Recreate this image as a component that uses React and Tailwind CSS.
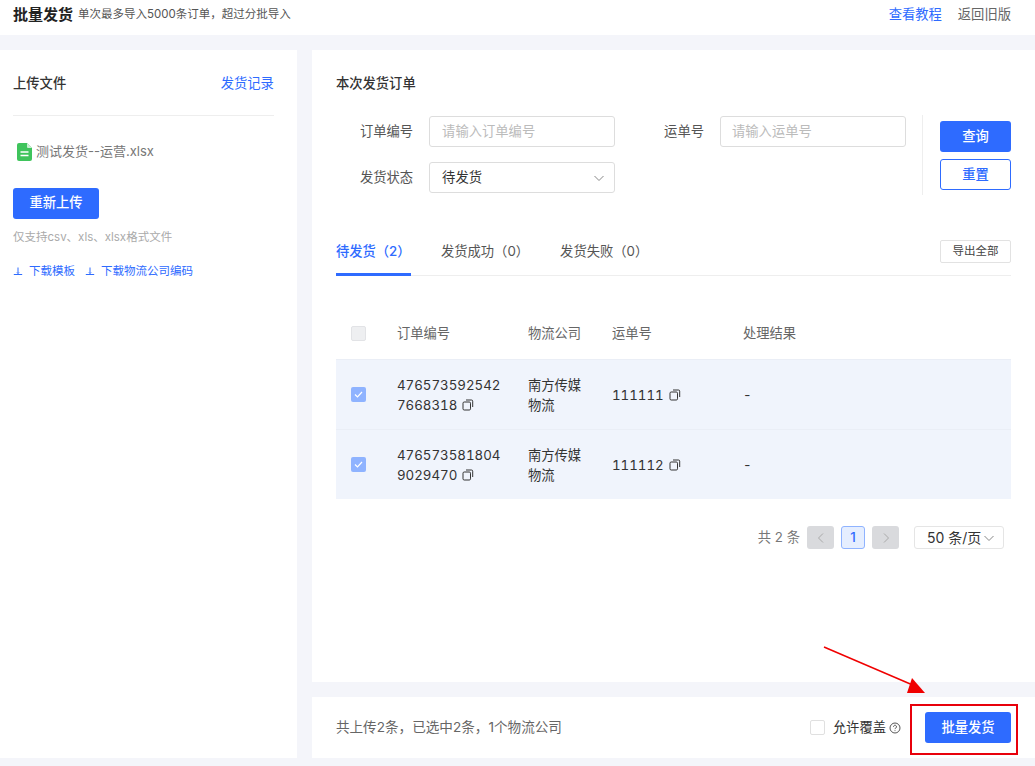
import React from 'react';

const CopyIcon = () => (
    <svg width="12" height="12" viewBox="0 0 12 12" fill="none" stroke="#333" strokeWidth="1" className="inline-block ml-[5px] mb-[2px]">
        <rect x="1" y="3" width="7.5" height="8" rx="1.2" />
        <path d="M4 1h5.5a1.2 1.2 0 0 1 1.2 1.2V8" />
    </svg>
);

const DownloadIcon = () => (
    <svg width="10" height="10" viewBox="0 0 10 10" fill="none" stroke="#2e6bff" strokeWidth="1">
        <path d="M5 1.500v6M4 6.500 5 7.500l1-1M.8 8.500h8.400" />
    </svg>
);

const Chevron = ({ color = '#888' }) => (
    <svg width="12" height="12" viewBox="0 0 12 12" fill="none" stroke={color} strokeWidth="1">
        <path d="M1.500 4 6 8.500 10.500 4" />
    </svg>
);

const Check = () => (
    <div className="w-[15px] h-[15px] rounded-[2px] bg-[#8fb3ff] flex items-center justify-center">
        <svg width="11" height="11" viewBox="0 0 11 11" fill="none" stroke="#fff" strokeWidth="1.2">
            <path d="M2 5.500 4.500 8 9 3" />
        </svg>
    </div>
);

const Field = ({ label, children }) => (
    <div className="flex items-center">
        <span className="whitespace-nowrap text-[13.3px] text-[#555] mr-4">{label}</span>
        {children}
    </div>
);

const rows = [
    ['476573592542', '7668318', '111111'],
    ['476573581804', '9029470', '111112'],
];

const App = () => {
    return (
        <div className="relative w-[1035px] h-[766px] overflow-hidden bg-[#f4f5fa] font-['Inter','Noto_Sans_CJK_SC',sans-serif] text-[#333]">
            <div className="h-[35px] bg-white flex items-center justify-between pl-[13px] pr-[24px] pb-[5px]">
                <div className="flex items-center">
                    <span className="text-[15px] font-bold text-[#222]">批量发货</span>
                    <span className="text-[11.500px] text-[#555] ml-[5px]">单次最多导入5000条订单，超过分批导入</span>
                </div>
                <div className="flex items-center gap-4 text-[13.3px]">
                    <span className="text-[#2e6bff]">查看教程</span>
                    <span className="text-[#666]">返回旧版</span>
                </div>
            </div>

            <div className="flex gap-[15px] mt-[15px] h-[708px]">
                <div className="w-[297px] bg-white pl-[13px] pr-[23px]">
                    <div className="h-[66px] border-b border-[#eeeeee] flex items-center justify-between pt-[2px]">
                        <span className="text-[13.3px] font-medium text-[#333]">上传文件</span>
                        <span className="text-[13.3px] text-[#2e6bff]">发货记录</span>
                    </div>
                    <div className="flex items-center mt-[26px] pl-[4px]">
                        <svg width="15" height="18" viewBox="0 0 15 18">
                            <path d="M2 0h8l5 5v11a2 2 0 0 1-2 2H2a2 2 0 0 1-2-2V2a2 2 0 0 1 2-2z" fill="#3fc45c" />
                            <path d="M10 0l5 5h-4a1 1 0 0 1-1-1z" fill="#c8efd2" />
                            <path d="M3.500 9h8M3.500 12.500h8" stroke="#fff" strokeWidth="1.400" />
                        </svg>
                        <span className="text-[13px] text-[#777] ml-[4px]">测试发货--运营.xlsx</span>
                    </div>
                    <button className="block mt-[26px] w-[86px] h-[31px] rounded-[3px] bg-[#2e6bff] text-white text-[13.3px] font-medium">重新上传</button>
                    <p className="mt-[10px] text-[11.500px] text-[#aaa] leading-[16px]">仅支持csv、xls、xlsx格式文件</p>
                    <div className="flex items-center mt-[18px] text-[11.500px] text-[#2e6bff] leading-[16px]">
                        <DownloadIcon />
                        <span className="ml-[6px]">下载模板</span>
                        <span className="ml-[10px]"><DownloadIcon /></span>
                        <span className="ml-[6px]">下载物流公司编码</span>
                    </div>
                </div>

                <div className="flex-1 flex flex-col gap-[15px]">
                    <div className="h-[632px] bg-white px-6">
                        <div className="pt-[23px] text-[13.3px] font-medium leading-5 text-[#333]">本次发货订单</div>
                        <div className="flex mt-[22px] h-[80px]">
                            <div className="flex flex-col gap-[15px] pt-[1px] ml-[24px]">
                                <Field label="订单编号">
                                    <div className="w-[186px] h-[31px] border border-[#ddd] rounded-[3px] pl-3 flex items-center text-[13.3px] text-[#bbb]">请输入订单编号</div>
                                </Field>
                                <Field label="发货状态">
                                    <div className="w-[186px] h-[31px] border border-[#ddd] rounded-[3px] pl-3 pr-[9px] flex items-center justify-between text-[13.3px] text-[#333]">
                                        待发货
                                        <Chevron />
                                    </div>
                                </Field>
                            </div>
                            <div className="ml-[49px] pt-[1px]">
                                <Field label="运单号">
                                    <div className="w-[186px] h-[31px] border border-[#ddd] rounded-[3px] pl-[11px] flex items-center text-[13.3px] text-[#bbb]">请输入运单号</div>
                                </Field>
                            </div>
                            <div className="ml-4 border-l border-[#eeeeee] pl-[17px] pt-[6px] flex flex-col gap-[7px]">
                                <button className="w-[71px] h-[31px] rounded-[3px] bg-[#2e6bff] text-white text-[13.3px] font-medium">查询</button>
                                <button className="w-[71px] h-[31px] rounded-[3px] border border-[#2e6bff] text-[#2e6bff] text-[13.3px] font-medium">重置</button>
                            </div>
                        </div>

                        <div className="mt-[35px] h-[46px] border-b border-[#eeeeee] flex items-start justify-between">
                            <div className="flex text-[13.3px] text-[#555] leading-5">
                                <div className="w-[75px] h-[46px] pt-[11px] border-b-[3px] border-[#2e6bff] text-[#2e6bff] font-medium whitespace-nowrap">待发货（2）</div>
                                <div className="ml-[30px] pt-[11px]">发货成功（0）</div>
                                <div className="ml-[31px] pt-[11px]">发货失败（0）</div>
                            </div>
                            <button className="w-[71px] h-[23px] mt-[10px] rounded-[2px] border border-[#e2e2e2] text-[11.500px] text-[#444]">导出全部</button>
                        </div>

                        <div className="mt-[32px]">
                            <div className="h-[51px] flex items-center text-[13.3px] text-[#666]">
                                <div className="w-[61px] pl-[15px]">
                                    <div className="w-[15px] h-[15px] rounded-[2px] bg-[#eeeff1] border border-[#e2e3e6]" />
                                </div>
                                <div className="w-[131px]">订单编号</div>
                                <div className="w-[84px]">物流公司</div>
                                <div className="w-[131px]">运单号</div>
                                <div>处理结果</div>
                            </div>
                            {rows.map((r, i) => (
                                <div key={i} className="h-[70px] bg-[#f0f4fc] border-t border-[#eaeef6] flex items-center text-[13.3px] leading-5 text-[#333] tabular-nums">
                                    <div className="w-[61px] pl-[15px]"><Check /></div>
                                    <div className="w-[131px]">
                                        <div>{r[0]}</div>
                                        <div>{r[1]}<CopyIcon /></div>
                                    </div>
                                    <div className="w-[84px]">
                                        <div>南方传媒</div>
                                        <div>物流</div>
                                    </div>
                                    <div className="w-[131px]">{r[2]}<CopyIcon /></div>
                                    <div>-</div>
                                </div>
                            ))}
                        </div>

                        <div className="mt-[27px] flex items-center justify-end pr-[7px] text-[13.3px]">
                            <span className="text-[#777] mr-[7px] whitespace-nowrap">共 2 条</span>
                            <div className="w-[27px] h-[23px] rounded-[3px] bg-[#d9dadd] flex items-center justify-center">
                                <svg width="10" height="12" viewBox="0 0 10 12" fill="none" stroke="#aaa"><path d="M7 1.500 2.500 6 7 10.500" /></svg>
                            </div>
                            <div className="w-[24px] h-[23px] ml-[7px] rounded-[3px] bg-[#e5eeff] border border-[#8fb3ff] flex items-center justify-center text-[#2e6bff] font-medium">1</div>
                            <div className="w-[27px] h-[23px] ml-[7px] rounded-[3px] bg-[#d9dadd] flex items-center justify-center">
                                <svg width="10" height="12" viewBox="0 0 10 12" fill="none" stroke="#aaa"><path d="M3 1.500 7.500 6 3 10.500" /></svg>
                            </div>
                            <div className="w-[90px] h-[23px] ml-[15px] rounded-[3px] border border-[#e5e5e5] pl-[12px] pr-[8px] flex items-center justify-between text-[#333]">
                                <span className="text-[14px] whitespace-nowrap">50 条/页</span>
                                <Chevron />
                            </div>
                        </div>
                    </div>

                    <div className="h-[61px] bg-white pl-6 pr-6 flex items-center justify-between">
                        <span className="text-[13.6px] text-[#666]">共上传2条，已选中2条，1个物流公司</span>
                        <div className="flex items-center">
                            <div className="w-[15px] h-[15px] rounded-[2px] border border-[#e0e0e0]" />
                            <span className="ml-2 text-[13.3px] text-[#333]">允许覆盖</span>
                            <svg width="12" height="12" viewBox="0 0 12 12" fill="none" stroke="#444" strokeWidth="0.9" className="ml-[3px]">
                                <circle cx="6" cy="6" r="5" />
                                <path d="M4.500 4.700a1.500 1.500 0 1 1 2.300 1.300c-.6.3-.8.6-.8 1.100M6 8.300v.8" />
                            </svg>
                            <button className="ml-[24px] w-[86px] h-[31px] rounded-[3px] bg-[#2e6bff] text-white text-[13.3px] font-medium">批量发货</button>
                        </div>
                    </div>
                </div>
            </div>

            {/* red annotation drawn on top of the screenshot */}
            <div className="absolute left-[910px] top-[704px] w-[108px] h-[51px] border-2 border-[#e8000b]" />
            <svg className="absolute left-[820px] top-[642px]" width="110" height="54" viewBox="0 0 110 54" fill="none">
                <path d="M4 5 95 44" stroke="#f00000" strokeWidth="1.500" />
                <path d="M92 36 87 51 105 51z" fill="#f00000" />
            </svg>
        </div>
    );
};

export default App;
